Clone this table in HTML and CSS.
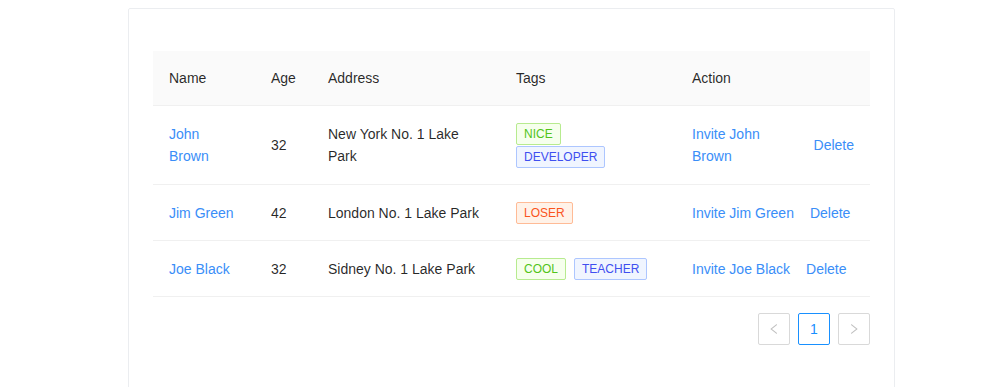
FILE: index.html
```html
<!DOCTYPE html>
<html>
<head>
<meta charset="utf-8">
<link rel="stylesheet" href="styles.css">
</head>
<body>
<div class="card">
  <table class="table">
    <colgroup>
      <col class="c-name"><col class="c-age"><col class="c-addr"><col class="c-tags"><col class="c-action">
    </colgroup>
    <thead>
      <tr><th>Name</th><th>Age</th><th>Address</th><th>Tags</th><th>Action</th></tr>
    </thead>
    <tbody>
      <tr>
        <td><a class="link">John Brown</a></td>
        <td>32</td>
        <td>New York No. 1 Lake Park</td>
        <td><div class="tags"><span class="tag green">NICE</span><span class="tag geekblue">DEVELOPER</span></div></td>
        <td><div class="space"><a class="link">Invite John Brown</a><a class="link">Delete</a></div></td>
      </tr>
      <tr>
        <td><a class="link">Jim Green</a></td>
        <td>42</td>
        <td>London No. 1 Lake Park</td>
        <td><div class="tags"><span class="tag volcano">LOSER</span></div></td>
        <td><div class="space"><a class="link">Invite Jim Green</a><a class="link">Delete</a></div></td>
      </tr>
      <tr>
        <td><a class="link">Joe Black</a></td>
        <td>32</td>
        <td>Sidney No. 1 Lake Park</td>
        <td><div class="tags"><span class="tag green">COOL</span><span class="tag geekblue">TEACHER</span></div></td>
        <td><div class="space"><a class="link">Invite Joe Black</a><a class="link">Delete</a></div></td>
      </tr>
    </tbody>
  </table>
  <ul class="pagination">
    <li class="page-item disabled">
      <svg viewBox="64 64 896 896" width="12" height="12" fill="currentColor"><path d="M724 218.3V141c0-6.7-7.7-10.4-12.9-6.3L260.3 486.8a31.860 31.860 0 000 50.3l450.8 352.1c5.3 4.1 12.9.4 12.9-6.3v-77.3c0-4.9-2.3-9.6-6.1-12.6l-360-281 360-281.1c3.8-3 6.1-7.7 6.1-12.6z"/></svg>
    </li>
    <li class="page-item active">1</li>
    <li class="page-item disabled">
      <svg viewBox="64 64 896 896" width="12" height="12" fill="currentColor"><path d="M765.7 486.8L314.9 134.7A7.970 7.970 0 00302 141v77.3c0 4.9 2.3 9.6 6.1 12.6l360 281.1-360 281.1c-3.9 3-6.1 7.7-6.1 12.6V883c0 6.7 7.7 10.4 12.9 6.3l450.8-352.1a31.960 31.960 0 000-50.4z"/></svg>
    </li>
  </ul>
</div>
</body>
</html>
```

FILE: styles.css
```css
body {
  margin: 8px;
  font-family: "Liberation Sans", Arial, sans-serif;
  font-size: 14px;
  line-height: 22px;
  color: rgba(0, 0, 0, 0.85);
  background: #fff;
}

.card {
  width: 717px;
  margin-left: 120px;
  padding: 42px 24px 60px;
  border: 1px solid #ebedf0;
  border-radius: 2px;
}

.table {
  width: 717px;
  table-layout: fixed;
  border-collapse: collapse;
  border-spacing: 0;
}

.c-name { width: 102px; }
.c-age { width: 57px; }
.c-addr { width: 188px; }
.c-tags { width: 176px; }
.c-action { width: 194px; }

.table th {
  text-align: left;
  font-weight: normal;
  background: #fafafa;
  padding: 16px;
  border-bottom: 1px solid #f0f0f0;
}

.table td {
  padding: 16px;
  border-bottom: 1px solid #f0f0f0;
  vertical-align: middle;
}

.link {
  color: #3a8ef8;
  cursor: pointer;
  text-decoration: none;
}

.space {
  display: flex;
  align-items: center;
  gap: 16px;
}

.tags {
  display: flex;
  flex-wrap: wrap;
  row-gap: 1px;
  padding-top: 1px;
}

.tag {
  display: block;
  font-size: 12px;
  line-height: 20px;
  padding: 0 7px;
  margin-right: 8px;
  border: 1px solid;
  border-radius: 2px;
  white-space: nowrap;
}

.green { color: #52c41a; background: #f6ffed; border-color: #b7eb8f; }
.geekblue { color: #3f4ff0; background: #f0f5ff; border-color: #adc6ff; }
.volcano { color: #fa541c; background: #fff2e8; border-color: #ffbb96; }

.pagination {
  list-style: none;
  margin: 16px 0;
  padding: 0;
  display: flex;
  justify-content: flex-end;
  gap: 8px;
}

.page-item {
  box-sizing: border-box;
  width: 32px;
  height: 32px;
  border: 1px solid #d9d9d9;
  border-radius: 2px;
  display: flex;
  align-items: center;
  justify-content: center;
  font-size: 14px;
}

.page-item.disabled {
  color: rgba(0, 0, 0, 0.25);
}

.page-item.active {
  border-color: #1890ff;
  color: #1890ff;
  font-weight: 500;
}
```
